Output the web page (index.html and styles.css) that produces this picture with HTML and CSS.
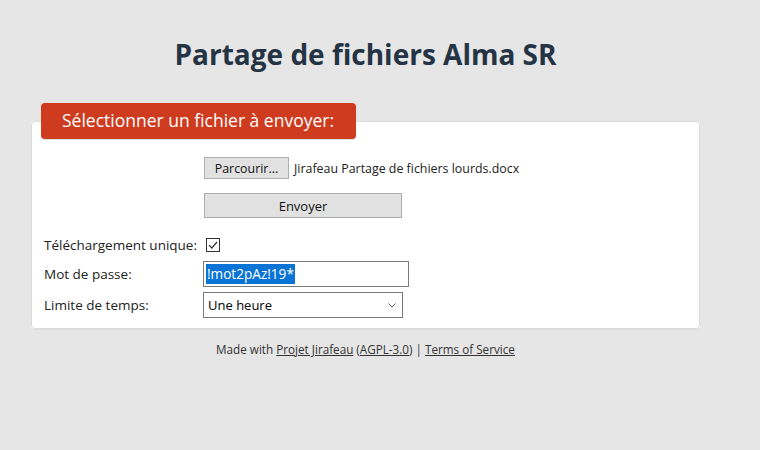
FILE: index.html
```html
<!DOCTYPE html>
<html lang="fr">
<head>
<meta charset="utf-8">
<title>Partage de fichiers Alma SR</title>
<link rel="stylesheet" href="styles.css">
</head>
<body>
<div class="page">
  <h1 class="title">Partage de fichiers Alma SR</h1>
  <fieldset class="card">
    <legend class="legend">Sélectionner un fichier à envoyer:</legend>
    <div class="file-row">
      <span class="btn browse">Parcourir...</span>
      <span class="filename">Jirafeau Partage de fichiers lourds.docx</span>
    </div>
    <div class="send-row">
      <span class="btn send">Envoyer</span>
    </div>
    <div class="options">
      <span class="label">Téléchargement unique:</span>
      <span class="check">
        <svg width="14" height="14" viewBox="0 0 14 14"><rect x="0.5" y="0.5" width="13" height="13" fill="#fff" stroke="#333"/><path d="M3 7.2 L5.8 10 L11 4" fill="none" stroke="#333" stroke-width="1.2"/></svg>
      </span>
      <span class="label">Mot de passe:</span>
      <span class="input pwd"><span class="sel">!mot2pAz!19*</span></span>
      <span class="label">Limite de temps:</span>
      <span class="input select">Une heure
        <svg class="chev" width="8" height="5" viewBox="0 0 8 5"><path d="M0.5 0.5 L4 4 L7.5 0.5" fill="none" stroke="#555" stroke-width="1"/></svg>
      </span>
    </div>
  </fieldset>
  <p class="footer">Made with <a href="#">Projet Jirafeau</a> (<a href="#">AGPL-3.0</a>) | <a href="#">Terms of Service</a></p>
</div>
</body>
</html>
```
FILE: styles.css
```css
html, body {
  margin: 0;
  padding: 0;
  background: #e6e6e6;
  font-family: "Open Sans", "Noto Sans", sans-serif;
  color: #222;
}
.page {
  width: 669px;
  margin-left: 31px;
}
.title {
  margin: 0;
  padding-top: 35px;
  height: 103px;
  box-sizing: border-box;
  text-align: center;
  font-size: 28px;
  line-height: 38px;
  font-weight: 700;
  color: #253445;
}
.card {
  margin: 0;
  padding: 18px 12px 10px 12px;
  background: #fff;
  border: 1px solid #dcdcdc;
  border-radius: 4px;
  box-sizing: border-box;
  height: 226px;
  box-shadow: 0 1px 1px rgba(0,0,0,0.04);
}
.legend {
  margin-left: -3px;
  padding: 0 21px;
  height: 36px;
  line-height: 35px;
  box-sizing: border-box;
  background: #cf3b1e;
  color: #fff;
  font-size: 17.5px;
  border-radius: 4px;
  width: 315px;
  white-space: nowrap;
  box-shadow: 0 1px 1px rgba(0,0,0,0.15);
}
.file-row {
  display: flex;
  align-items: center;
  gap: 5px;
  margin-left: 160px;
  font-size: 12.4px;
}
.btn {
  display: inline-flex;
  align-items: center;
  justify-content: center;
  background: #e1e1e1;
  border: 1px solid #adadad;
  box-sizing: border-box;
  font-size: 12.4px;
  color: #111;
}
.browse {
  width: 85px;
  height: 22px;
}
.filename {
  color: #222;
}
.send-row {
  margin-left: 160px;
  margin-top: 14px;
}
.send {
  width: 198px;
  height: 25px;
  font-size: 13px;
}
.options {
  display: grid;
  grid-template-columns: 159px auto;
  grid-template-rows: 26px 32px 30px;
  align-items: center;
  justify-items: start;
  margin-top: 14px;
  font-size: 13.5px;
}
.label {
  color: #222;
}
.check {
  display: block;
  margin-left: 3px;
  height: 14px;
}
.check svg { display: block; }
.input {
  display: flex;
  align-items: center;
  box-sizing: border-box;
  border: 1px solid #7a7a7a;
  background: #fff;
  height: 26px;
  padding: 0 2px;
  font-size: 13px;
  color: #000;
}
.pwd {
  width: 206px;
}
.sel {
  background: #0a74d6;
  color: #fff;
  font-size: 13.6px;
  line-height: 20px;
  padding: 0 1px;
}
.select {
  width: 200px;
  justify-content: space-between;
  padding: 0 6px 0 4px;
}
.chev { display: block; }
.footer {
  margin: 12px 0 0 0;
  text-align: center;
  font-size: 11.7px;
  color: #333;
}
.footer a {
  color: #333;
  text-decoration: underline;
}
```
